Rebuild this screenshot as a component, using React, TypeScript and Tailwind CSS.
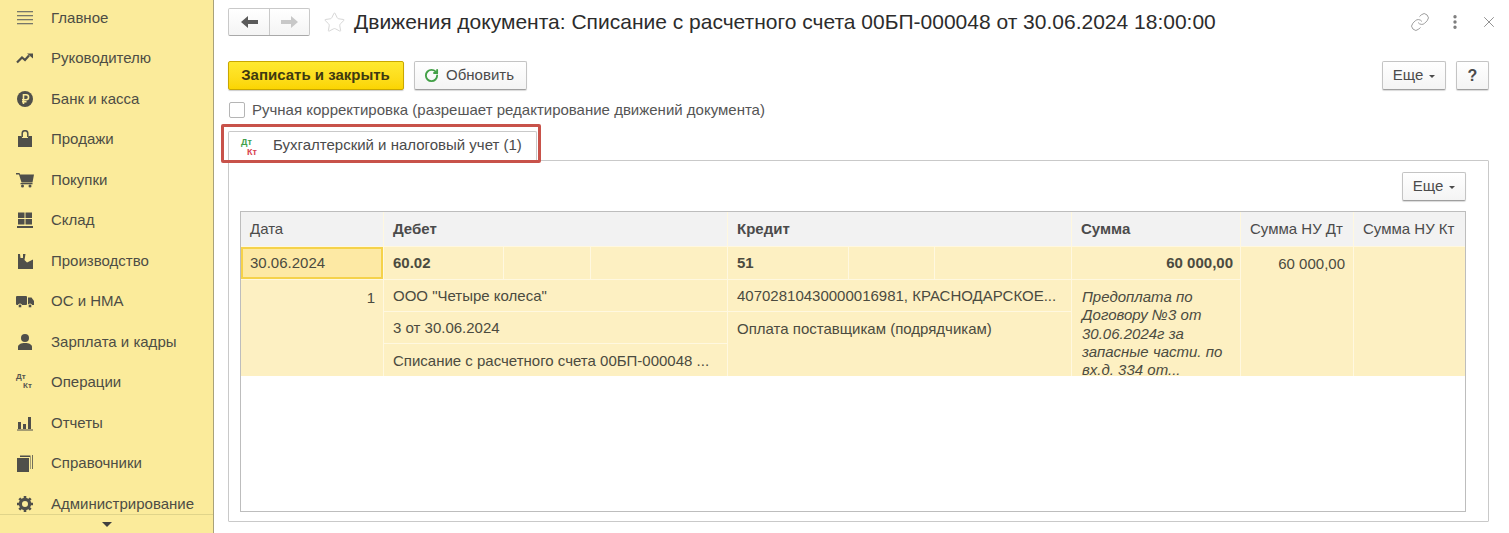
import { MoreVertical, X, Link, Star, RotateCw } from "lucide-react";

const nav = [
  { label: "Главное", icon: "menu" },
  { label: "Руководителю", icon: "trend" },
  { label: "Банк и касса", icon: "rub" },
  { label: "Продажи", icon: "bag" },
  { label: "Покупки", icon: "cart" },
  { label: "Склад", icon: "stock" },
  { label: "Производство", icon: "factory" },
  { label: "ОС и НМА", icon: "truck" },
  { label: "Зарплата и кадры", icon: "person" },
  { label: "Операции", icon: "dtkt" },
  { label: "Отчеты", icon: "bars" },
  { label: "Справочники", icon: "books" },
  { label: "Администрирование", icon: "gear" },
];

function NavIcon({ name }: { name: string }) {
  const c = "#4f4f4a";
  if (name === "dtkt") {
    return (
      <div className="relative h-[18px] w-[18px] text-[8px] leading-[8px] font-bold text-[#55554f]">
        <span className="absolute top-0 left-0">Дт</span>
        <span className="absolute top-[9px] left-[7px]">Кт</span>
      </div>
    );
  }
  return (
    <svg width="18" height="18" viewBox="0 0 18 18" fill={c}>
      {name === "menu" && (
        <g fill="#77776a">
          <rect x="1" y="2" width="16" height="1.3" />
          <rect x="1" y="6" width="16" height="1.3" />
          <rect x="1" y="10" width="16" height="1.3" />
          <rect x="1" y="14" width="16" height="1.3" />
        </g>
      )}
      {name === "trend" && (
        <g>
          <path d="M1 13.5l5-5 3 2.5 4-4.500" fill="none" stroke={c} strokeWidth="2.200" />
          <path d="M11 4.500h6v5z" />
        </g>
      )}
      {name === "rub" && (
        <g>
          <circle cx="9" cy="9" r="8" />
          <path d="M7.500 14V4.800h2.600a2.400 2.400 0 0 1 0 4.900H6M6 11.700h4.500" fill="none" stroke="#fbeb9b" strokeWidth="1.600" />
        </g>
      )}
      {name === "bag" && (
        <g>
          <path d="M2 6h3.500l.7 2h5.600l.7-2H16v11H2z" />
          <path d="M6.200 7V3.500a2.800 2.800 0 0 1 5.600 0V7" fill="none" stroke={c} strokeWidth="1.500" />
        </g>
      )}
      {name === "cart" && (
        <g>
          <path d="M0 2h3.500l.6 1.500H18l-1.500 8H5.500L3 3.500H0z" />
          <rect x="4.500" y="12" width="12" height="1.300" />
          <circle cx="6.500" cy="15" r="1.500" />
          <circle cx="14" cy="15" r="1.500" />
        </g>
      )}
      {name === "stock" && (
        <g>
          <rect x="2" y="1.500" width="6.500" height="5.500" />
          <rect x="9.500" y="1.500" width="6.500" height="5.500" />
          <rect x="2" y="8" width="6.500" height="5.500" />
          <rect x="9.500" y="8" width="6.500" height="5.500" />
          <rect x="1" y="15" width="16" height="2" />
        </g>
      )}
      {name === "factory" && (
        <path d="M2 17V2h2l.5 4H7V2h2.500L8.500 8 11 10.500l6-3V17z" />
      )}
      {name === "truck" && (
        <g>
          <rect x="0" y="4" width="11" height="9" rx="1" />
          <path d="M12 5.500h3.500L18 9v4h-6z" />
          <circle cx="4" cy="14" r="2" stroke="#fbeb9b" />
          <circle cx="14" cy="14" r="2" stroke="#fbeb9b" />
        </g>
      )}
      {name === "person" && (
        <g>
          <circle cx="9" cy="5" r="4" />
          <path d="M2 17v-3c0-2.500 3-4 7-4s7 1.500 7 4v3z" />
        </g>
      )}
      {name === "bars" && (
        <g>
          <rect x="2" y="8" width="3" height="7" />
          <rect x="7" y="10" width="3" height="5" />
          <rect x="12" y="3" width="3" height="12" />
          <rect x="1" y="15.500" width="16" height="1" />
        </g>
      )}
      {name === "books" && (
        <g>
          <rect x="1" y="4" width="12" height="14" />
          <path d="M4 3V1.500h10.500V15H14V3zM16 1v14h.8V1z" />
        </g>
      )}
      {name === "gear" && (
        <g>
          <circle cx="9" cy="9" r="4.600" fill="none" stroke={c} strokeWidth="3.200" />
          <path d="M9 1v3M9 14v3M1 9h3M14 9h3M3.300 3.300l2.200 2.200M12.500 12.500l2.200 2.200M14.700 3.300l-2.200 2.200M5.500 12.500l-2.200 2.200" stroke={c} strokeWidth="2.600" />
        </g>
      )}
    </svg>
  );
}

function Btn({ children, className = "" }: { children: React.ReactNode; className?: string }) {
  return (
    <div className={`flex h-[29px] items-center justify-center rounded-[2px] border border-[#c4c4c4] border-b-[#9f9f9f] bg-gradient-to-b from-white to-[#f4f4f4] text-[15px] text-[#4b4b4b] shadow-[0_1px_1px_rgba(0,0,0,0.15)] ${className}`}>
      {children}
    </div>
  );
}

function Caret() {
  return <span className="mt-[2px] ml-[6px] h-0 w-0 border-x-[3px] border-t-[3px] border-x-transparent border-t-[#4b4b4b]" />;
}

const cell = "bg-[#fdf0c2] px-[9px] flex items-center text-[15px] text-[#4b4b40] whitespace-nowrap overflow-hidden";
const head = "bg-[#f2f2f2] flex items-center px-[9px] text-[15px] text-[#4b4b4b] whitespace-nowrap overflow-hidden";

export default function App() {
  return (
    <div className="flex h-[533px] w-[1509px] overflow-hidden bg-white font-['Liberation_Sans',Arial,sans-serif]">
      <aside className="flex h-full w-[214px] shrink-0 flex-col border-r border-[#a9a27a] bg-[#fbeb9b]">
        <nav className="flex h-[514px] flex-col overflow-hidden">
          {nav.map((n, i) => (
            <div key={n.label} className={`flex h-[40.500px] shrink-0 items-center text-[15px] text-[#4d4d45] ${i === 0 ? "-mt-[2.400px]" : ""}`}>
              <div className="ml-[16px] flex w-[35px] shrink-0">
                <NavIcon name={n.icon} />
              </div>
              {n.label}
            </div>
          ))}
        </nav>
        <div className="flex h-[19px] items-center justify-center border-t border-[#e0d48a]">
          <span className="h-0 w-0 border-x-[5px] border-t-[5px] border-x-transparent border-t-[#3f3f3f]" />
        </div>
      </aside>

      <main className="flex min-w-0 flex-1 flex-col pr-[20px] pl-[14px]">
        <div className="flex h-[44px] shrink-0 items-center">
          <div className="flex h-[28px] w-[82px] rounded-[2px] border border-[#c9c9c9] border-b-[#a9a9a9] bg-gradient-to-b from-white to-[#f4f4f4]">
            <div className="flex w-[41px] items-center justify-center border-r border-[#c9c9c9]">
              <svg width="17" height="14" viewBox="0 0 17 14" fill="#5a5a5a">
                <path d="M0 7l7-6v4h10v4H7v4z" />
              </svg>
            </div>
            <div className="flex flex-1 items-center justify-center">
              <svg width="17" height="14" viewBox="0 0 17 14" fill="#c8c8c8">
                <path d="M17 7l-7-6v4H0v4h10v4z" />
              </svg>
            </div>
          </div>
          <Star size={23} strokeWidth={1} color="#d4d4d4" className="ml-[13px]" />
          <h1 className="-mt-[1px] ml-[8px] text-[21px] leading-none font-normal whitespace-nowrap text-[#2c2c2c]">
            Движения документа: Списание с расчетного счета 00БП-000048 от 30.06.2024 18:00:00
          </h1>
          <div className="-mr-[9px] ml-auto flex items-center">
            <Link size={20} strokeWidth={1} color="#8a8a8a" />
            <MoreVertical size={18} strokeWidth={2.500} color="#7a7a7a" className="ml-[16px]" />
            <X size={18} strokeWidth={1} color="#6e6e6e" className="ml-[16px]" />
          </div>
        </div>

        <div className="mt-[17px] flex shrink-0 items-center">
          <div className="flex h-[29px] w-[176px] items-center justify-center rounded-[2px] border border-[#c9a700] bg-gradient-to-b from-[#ffe92f] to-[#fbd500] pr-[1px] text-[15px] font-bold text-[#3f3a10] shadow-[0_1px_1px_rgba(0,0,0,0.2)]">
            Записать и закрыть
          </div>
          <Btn className="ml-[10px] w-[113px] pr-[3px]">
            <RotateCw size={15} strokeWidth={3} color="#43a047" className="mr-[7px]" />
            Обновить
          </Btn>
          <Btn className="ml-auto w-[64px]">
            Еще
            <Caret />
          </Btn>
          <Btn className="ml-[10px] w-[33px] text-[16px] font-bold">?</Btn>
        </div>

        <label className="mt-[10px] flex h-[20px] shrink-0 items-center text-[15px] text-[#555]">
          <span className="mr-[7px] ml-[1px] h-[16px] w-[16px] rounded-[2px] border border-[#b5b5b5] bg-white" />
          Ручная корректировка (разрешает редактирование движений документа)
        </label>

        <div className="relative z-10 mt-[11px] flex h-[30px] w-[309px] shrink-0 items-center rounded-t-[2px] border border-b-0 border-[#c9c9c9] bg-white pb-[2px] text-[15px] text-[#4b4b4b]">
          <div className="relative ml-[12px] h-[20px] w-[32px] shrink-0 text-[9px] leading-[9px] font-bold">
            <span className="absolute top-[2px] left-0 text-[#3fa04a]">Дт</span>
            <span className="absolute top-[12px] left-[6px] text-[#d8434f]">Кт</span>
          </div>
          Бухгалтерский и налоговый учет (1)
          <div className="pointer-events-none absolute -top-[8px] -left-[8px] h-[39px] w-[320px] rounded-[2px] border-[3px] border-[#c8524a]" />
        </div>

        <section className="-mt-px mb-[11px] flex min-h-0 flex-1 flex-col rounded-[1px] border border-[#c9c9c9] pr-[22px] pl-[11px]">
          <div className="mt-[11px] flex shrink-0 justify-end">
            <Btn className="w-[64px]">
              Еще
              <Caret />
            </Btn>
          </div>
          <div className="mt-[10px] mb-[9px] flex-1 border border-[#bdbdbd] bg-white">
            <div className="grid grid-cols-[142px_343px_343px_168px_112px_1fr] grid-rows-[34px_32px_31px_31px_32px] gap-px bg-[#fff8e0]">
              <div className={head}>Дата</div>
              <div className={`${head} font-bold`}>Дебет</div>
              <div className={`${head} font-bold`}>Кредит</div>
              <div className={`${head} font-bold`}>Сумма</div>
              <div className={head}>Сумма НУ Дт</div>
              <div className={head}>Сумма НУ Кт</div>

              <div className="flex items-center border-2 border-[#f5d24a] bg-[#fde9a4] px-[7px] text-[15px] text-[#4b4b40]">30.06.2024</div>
              <div className="grid grid-cols-[119px_86px_1fr] gap-px">
                <div className={`${cell} font-bold`}>60.02</div>
                <div className={cell} />
                <div className={cell} />
              </div>
              <div className="grid grid-cols-[120px_85px_1fr] gap-px">
                <div className={`${cell} font-bold`}>51</div>
                <div className={cell} />
                <div className={cell} />
              </div>
              <div className={`${cell} justify-end !pr-[7px] font-bold`}>60 000,00</div>
              <div className={`${cell} row-span-4 items-start justify-end !pr-[8px] pt-[6px]`}>60 000,00</div>
              <div className={`${cell} row-span-4`} />

              <div className={`${cell} row-span-3 items-start justify-end !pr-[8px] pt-[7px]`}>1</div>
              <div className={`${cell} pt-[1px]`}>ООО "Четыре колеса"</div>
              <div className={`${cell} pt-[1px]`}>40702810430000016981, КРАСНОДАРСКОЕ...</div>
              <div className="row-span-3 bg-[#fdf0c2] pt-[8px] pr-[12px] pl-[10px] text-[15px] leading-[18.300px] text-[#4b4b40] italic">
                Предоплата по Договору №3 от 30.06.2024г за запасные части. по вх.д. 334 от...
              </div>

              <div className={`${cell} pt-[1px]`}>3 от 30.06.2024</div>
              <div className={`${cell} row-span-2 items-start pt-[6px]`}>Оплата поставщикам (подрядчикам)</div>
              <div className={`${cell} pt-[2px]`}>Списание с расчетного счета 00БП-000048 ...</div>
            </div>
          </div>
        </section>
      </main>
    </div>
  );
}
